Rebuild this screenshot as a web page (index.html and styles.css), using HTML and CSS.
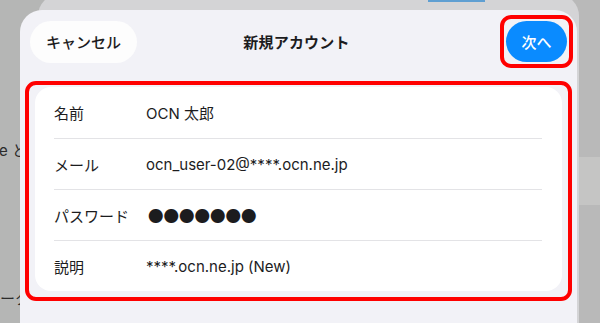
FILE: index.html
```html
<!DOCTYPE html>
<html lang="ja">
<head>
    <meta charset="UTF-8">
    <meta name="viewport" content="width=device-width, initial-scale=1.0">
    <title>新規アカウント</title>
    <link rel="stylesheet" href="styles.css">
</head>
<body>
    <div class="backdrop">
        <div class="backdrop-left">
            <p class="ghost ghost-top">e と</p>
            <p class="ghost ghost-bottom">ータ・</p>
        </div>
        <div class="backdrop-right">
            <div class="ghost-band"></div>
        </div>
    </div>

    <div class="back-sheet">
        <div class="back-sheet-bar"></div>
    </div>

    <div class="sheet">
        <header class="sheet-header">
            <button class="btn-cancel" type="button">キャンセル</button>
            <h1>新規アカウント</h1>
            <span class="mark mark-button">
                <button class="btn-next" type="button">次へ</button>
            </span>
        </header>

        <div class="mark mark-form">
            <div class="card">
                <div class="row">
                    <span class="label">名前</span>
                    <span class="value">OCN 太郎</span>
                </div>
                <div class="row">
                    <span class="label">メール</span>
                    <span class="value">ocn_user-02@****.ocn.ne.jp</span>
                </div>
                <div class="row">
                    <span class="label">パスワード</span>
                    <span class="value dots">●●●●●●●</span>
                </div>
                <div class="row">
                    <span class="label">説明</span>
                    <span class="value">****.ocn.ne.jp (New)</span>
                </div>
            </div>
        </div>
    </div>
</body>
</html>
```

FILE: styles.css
```css
:root {
    --sheet-bg: #f2f2f7;
    --text-color: #1c1c1e;
    --blue: #0a8bff;
    --mark-red: #ff0000;
    --line: #e3e3e6;
}

* {
    margin: 0;
    padding: 0;
    box-sizing: border-box;
    font-family: Inter, "Noto Sans CJK JP", sans-serif;
}

body {
    width: 600px;
    height: 323px;
    overflow: hidden;
    position: relative;
    background-color: #b5b6b5;
    color: var(--text-color);
}

/* page dimmed behind the sheets */
.backdrop {
    display: flex;
    height: 100%;
}

.backdrop-left {
    width: 50%;
    display: flex;
    flex-direction: column;
}

.ghost {
    font-size: 15px;
    color: #2b2b2b;
    white-space: nowrap;
}

.ghost-top {
    margin-top: 139px;
    margin-left: -1px;
}

.ghost-bottom {
    margin-top: 127px;
}

.backdrop-right {
    width: 50%;
    background-color: #b9b9b9;
}

.ghost-band {
    margin-top: 157px;
    height: 48px;
    background-color: #c5c5c4;
}

.back-sheet {
    position: absolute;
    top: -6px;
    left: 38px;
    right: 21px;
    bottom: 0;
    background-color: #d4d4d6;
    border-radius: 22px 22px 0 0;
}

.back-sheet-bar {
    margin: 6px 0 0 390px;
    width: 57px;
    height: 2px;
    background-color: #5f9fd2;
}

/* front sheet */
.sheet {
    position: absolute;
    top: 10px;
    left: 20px;
    width: 557px;
    bottom: 0;
    background-color: var(--sheet-bg);
    border-radius: 22px 22px 0 0;
    padding: 5px 5px 0 5px;
}

.sheet-header {
    display: grid;
    grid-template-columns: 1fr auto 1fr;
    align-items: center;
    padding-left: 5px;
    margin-right: -1px;
}

.sheet-header h1 {
    font-size: 15px;
    font-weight: 700;
    letter-spacing: 0.2px;
    margin-right: 10px;
}

.btn-cancel {
    justify-self: start;
    height: 42px;
    padding: 0 16px;
    border: none;
    border-radius: 21px;
    background-color: #fdfdfd;
    color: var(--text-color);
    font-size: 15px;
    font-weight: 500;
}

.mark {
    border: 4px solid var(--mark-red);
    border-radius: 11px;
}

.mark-button {
    justify-self: end;
    padding: 2px;
}

.btn-next {
    display: block;
    width: 61px;
    height: 41px;
    border: none;
    border-radius: 21px;
    background-color: var(--blue);
    color: #ffffff;
    font-size: 15px;
    font-weight: 500;
}

.mark-form {
    margin-top: 13px;
    padding: 2px 6px 6px 6px;
}

.card {
    background-color: #ffffff;
    border-radius: 16px;
    padding: 0 20px 0 19px;
}

.row {
    display: flex;
    align-items: center;
    height: 51px;
    font-size: 15px;
}

.row + .row {
    border-top: 1px solid var(--line);
}

.label {
    width: 92px;
    flex-shrink: 0;
}

.value {
    white-space: nowrap;
}

.dots {
    font-family: "Noto Sans CJK JP", sans-serif;
    font-size: 15.5px;
    margin-left: 2px;
}
```
